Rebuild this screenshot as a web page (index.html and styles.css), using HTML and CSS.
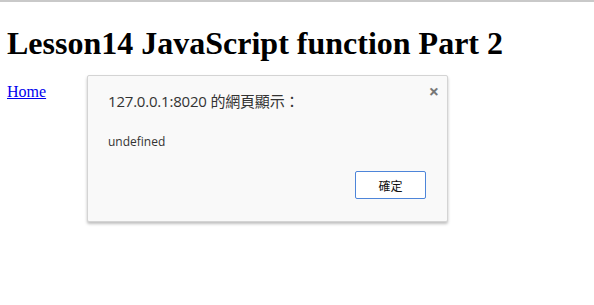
FILE: index.html
```html
<!DOCTYPE html>
<html lang="zh-Hant">
<head>
  <meta charset="UTF-8" />
  <title>Lesson14</title>
  <link rel="stylesheet" href="styles.css">
</head>
<body>
  <div class="page">
    <h1>Lesson14 JavaScript function Part 2</h1>
    <a href="#">Home</a>
  </div>

  <div class="alert-box">
    <span class="alert-close">&times;</span>
    <div class="alert-title">127.0.0.1:8020 的網頁顯示：</div>
    <div class="alert-msg">undefined</div>
    <div class="alert-actions">
      <button class="alert-btn">確定</button>
    </div>
  </div>
</body>
</html>
```

FILE: styles.css
```css
body {
  margin: 0;
  border-top: 2px solid #c9c9c9;
  font-family: 'Liberation Serif', serif;
  background: #fff;
}

.page {
  margin: 0 7px;
}

.page h1 {
  font-size: 32px;
  margin: 23px 0 21px;
}

.page a {
  color: #0000ee;
  font-size: 16px;
}

.alert-box {
  position: absolute;
  left: 87px;
  top: 75px;
  width: 361px;
  height: 147px;
  box-sizing: border-box;
  padding: 14px 20px 0 20px;
  background: #f9f9f9;
  border: 1px solid #d4d4d4;
  border-radius: 2px;
  box-shadow: 0 2px 3px rgba(0,0,0,0.25);
  font-family: 'Open Sans', 'Noto Sans CJK TC', sans-serif;
  color: #333;
}

.alert-close {
  position: absolute;
  top: 3px;
  right: 8px;
  font-size: 18px;
  font-weight: bold;
  color: #777;
}

.alert-title {
  font-size: 15px;
  letter-spacing: -0.2px;
}

.alert-msg {
  margin-top: 22px;
  font-size: 12px;
}

.alert-actions {
  display: flex;
  justify-content: flex-end;
  margin-top: 21px;
  padding-right: 1px;
}

.alert-btn {
  width: 71px;
  height: 28px;
  background: #fff;
  border: 1px solid #4d85d9;
  border-radius: 2px;
  font-family: 'Noto Sans CJK TC', sans-serif;
  font-size: 12px;
  color: #111;
}
```
